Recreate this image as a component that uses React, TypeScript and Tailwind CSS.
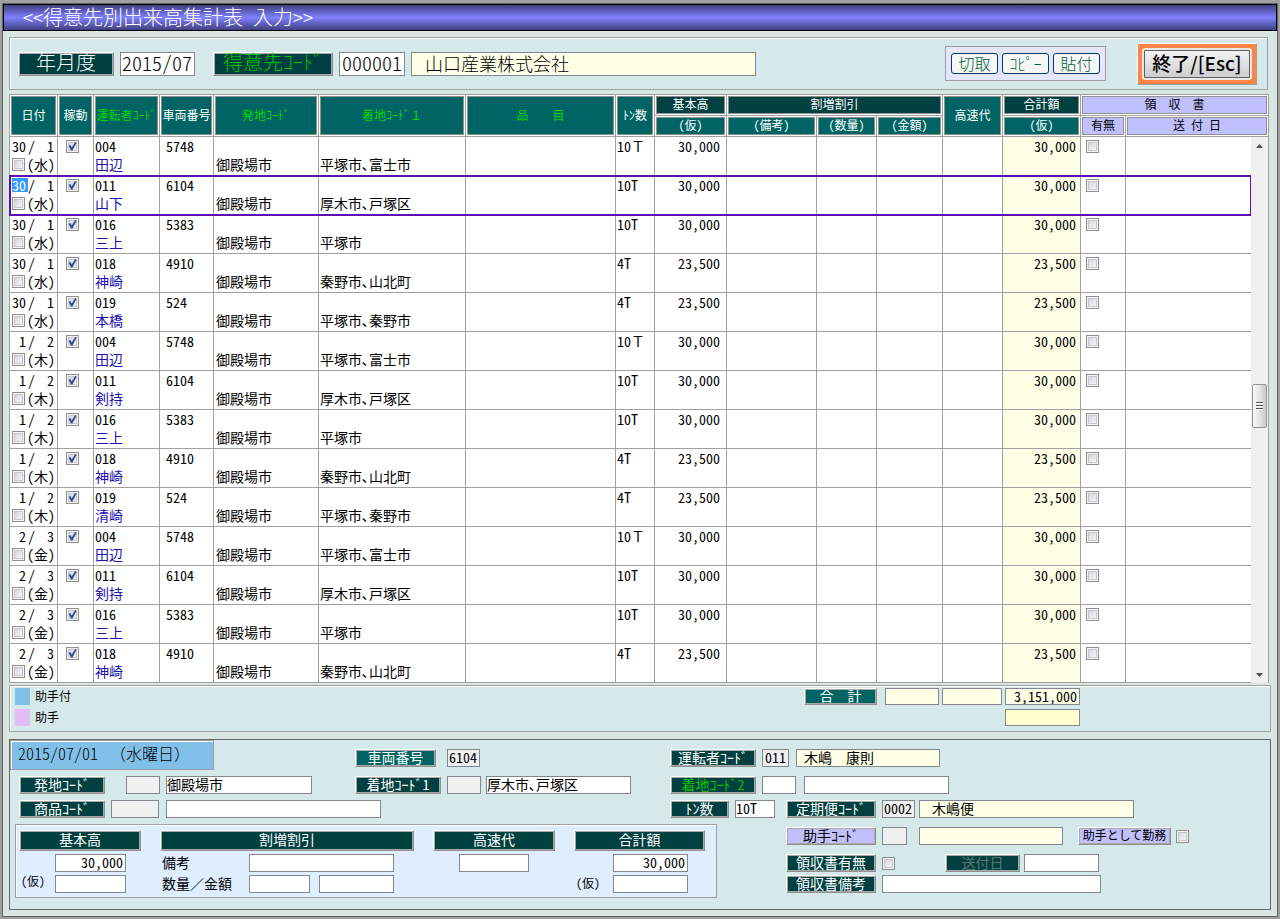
import type React from "react"

import { useState } from "react"
import { clsx } from "clsx"

type Trip = {
  day: string
  seq: string
  weekday: string
  driverCode: string
  driver: string
  vehicle: string
  origin: string
  destination: string
  tons: string
  amount: string
}

const routes = [
  { driverCode: "004", vehicle: "5748", destination: "平塚市､富士市", tons: "10Ｔ", amount: "30,000" },
  { driverCode: "011", vehicle: "6104", destination: "厚木市､戸塚区", tons: "10T", amount: "30,000" },
  { driverCode: "016", vehicle: "5383", destination: "平塚市", tons: "10T", amount: "30,000" },
  { driverCode: "018", vehicle: "4910", destination: "秦野市､山北町", tons: "4T", amount: "23,500" },
  { driverCode: "019", vehicle: "524", destination: "平塚市､秦野市", tons: "4T", amount: "23,500" },
]

const days = [
  { day: "30", seq: "1", weekday: "水", drivers: ["田辺", "山下", "三上", "神崎", "本橋"] },
  { day: "1", seq: "2", weekday: "木", drivers: ["田辺", "剣持", "三上", "神崎", "清崎"] },
  { day: "2", seq: "3", weekday: "金", drivers: ["田辺", "剣持", "三上", "神崎"] },
]

const trips: Trip[] = days.flatMap(({ drivers, ...date }) =>
  drivers.map((driver, i) => ({ ...date, ...routes[i], driver, origin: "御殿場市" })),
)

// full-width spaces and signs keep their full cell
const wide = "[font-feature-settings:normal]"

const columnWidths = [
  "w-[48px]",
  "w-[36px]",
  "w-[66px]",
  "w-[54px]",
  "w-[105px]",
  "w-[147px]",
  "w-[150px]",
  "w-[39px]",
  "w-[72px]",
  "w-[90px]",
  "w-[60px]",
  "w-[66px]",
  "w-[60px]",
  "w-[78px]",
  "w-[45px]",
  "",
]

function Columns() {
  return (
    <colgroup>
      {columnWidths.map((width, i) => (
        <col key={i} className={width} />
      ))}
    </colgroup>
  )
}

const tones = {
  dark: "bg-[#004040] text-white",
  teal: "bg-[#006464] text-white",
  green: "bg-[#004040] text-[#00c800]",
  tealGreen: "bg-[#006464] text-[#00d800]",
  muted: "bg-[#004040] text-[#5c7474]",
  lavender: "bg-[#c0c0ff] text-black",
}

type Tone = keyof typeof tones

type TagProps = {
  children: React.ReactNode
  htmlFor?: string
  tone?: Tone
  className?: string
}

function Tag({ children, htmlFor, tone = "dark", className }: TagProps) {
  const style = clsx(
    "flex shrink-0 items-center justify-center whitespace-pre border border-t-white border-l-white border-r-[#909090] border-b-[#909090] pb-[3px] shadow-[inset_0_0_0_1px_#a8a8a8]",
    tones[tone],
    className,
  )
  return htmlFor ? (
    <label htmlFor={htmlFor} className={style}>
      {children}
    </label>
  ) : (
    <span className={style}>{children}</span>
  )
}

type FieldProps = {
  id?: string
  label?: string
  value?: string
  fill?: string
  className?: string
}

function Field({ id, label, value = "", fill = "bg-white", className }: FieldProps) {
  const [text, setText] = useState(value)
  return (
    <input
      id={id}
      aria-label={label}
      type="text"
      value={text}
      onChange={(e) => setText(e.target.value)}
      className={clsx("block shrink-0 border border-[#828790] pb-0.5 outline-none", fill, className)}
    />
  )
}

type CheckProps = {
  id?: string
  label?: string
  checked?: boolean
}

function Check({ id, label, checked = false }: CheckProps) {
  const [on, setOn] = useState(checked)
  return (
    <span className="relative block size-[13px] shrink-0">
      <input
        id={id}
        aria-label={label}
        type="checkbox"
        checked={on}
        onChange={(e) => setOn(e.target.checked)}
        className="block size-[13px] appearance-none border border-[#8e8f8f] bg-linear-to-br from-[#ccd0d8] to-[#fcfcfc] shadow-[inset_0_0_0_1px_#f4f4f4,inset_0_0_0_2px_#c8c8cc]"
      />
      {on && (
        <svg viewBox="0 0 13 13" className="pointer-events-none absolute inset-0 size-[13px]" aria-hidden="true">
          <path d="M2.6 5.8 L4.4 5 L5.7 7.4 L9.2 2 L10.6 2.8 L6.4 10.4 L5 10.4 Z" fill="#33498f" />
        </svg>
      )}
    </span>
  )
}

type HeadProps = {
  children: React.ReactNode
  tone?: Tone
  colSpan?: number
  rowSpan?: number
  className?: string
}

function Head({ children, tone = "teal", colSpan, rowSpan, className }: HeadProps) {
  return (
    <th
      colSpan={colSpan}
      rowSpan={rowSpan}
      className={clsx(
        "overflow-hidden whitespace-pre border-r border-b border-[#a0a0a0] px-0 pt-0 pb-0.5 text-center align-middle text-xs leading-4 font-normal shadow-[inset_0_0_0_1px_#fff,inset_0_0_0_2px_#909090]",
        tones[tone],
        className,
      )}
    >
      {children}
    </th>
  )
}

function GridHeader() {
  return (
    <table className="w-full table-fixed border-separate border-spacing-0">
      <Columns />
      <thead>
        <tr className="h-[21px]">
          <Head rowSpan={2}>日付</Head>
          <Head rowSpan={2}>稼動</Head>
          <Head rowSpan={2} tone="tealGreen">運転者ｺｰﾄﾞ</Head>
          <Head rowSpan={2}>車両番号</Head>
          <Head rowSpan={2} tone="tealGreen">発地ｺｰﾄﾞ</Head>
          <Head rowSpan={2} tone="tealGreen" className={wide}>着地ｺｰﾄﾞ１</Head>
          <Head rowSpan={2} tone="tealGreen" className={wide}>品　　目</Head>
          <Head rowSpan={2}>ﾄﾝ数</Head>
          <Head tone="dark">基本高</Head>
          <Head tone="dark" colSpan={3}>割増割引</Head>
          <Head rowSpan={2}>高速代</Head>
          <Head tone="dark">合計額</Head>
          <Head tone="lavender" colSpan={2} className={wide}>領　収　書</Head>
        </tr>
        <tr className="h-[21px]">
          <Head>(仮)</Head>
          <Head>(備考)</Head>
          <Head>(数量)</Head>
          <Head>(金額)</Head>
          <Head>(仮)</Head>
          <Head tone="lavender">有無</Head>
          <Head tone="lavender">送 付 日</Head>
        </tr>
      </thead>
    </table>
  )
}

const cell = "border-r border-b border-[#a0a0a0] p-0 align-top"

function TripRow({ trip, selected }: { trip: Trip; selected: boolean }) {
  const name = `${trip.day}日 ${trip.driver}`
  return (
    <tr className={clsx("h-[39px]", selected && "outline-2 -outline-offset-1 outline-[#5c0fb4]")}>
      <td className={cell}>
        <div className="flex h-[18px] items-center pr-[3px] pl-0.5">
          {selected ? (
            <input
              aria-label="日"
              defaultValue={trip.day}
              className="h-3.5 w-4 bg-[#3399ff] leading-[14px] text-white outline-none"
            />
          ) : (
            <span className="w-4 whitespace-pre">{trip.day.padStart(2)}</span>
          )}
          <span>/</span>
          <span className="ml-auto">{trip.seq}</span>
        </div>
        <div className="flex h-[18px] items-center gap-0.5 pl-0.5">
          <Check label={`${name} 助手付`} />
          <span>({trip.weekday})</span>
        </div>
      </td>
      <td className={cell}>
        <div className="flex justify-center pt-[3px] pr-1.5">
          <Check label={`${name} 稼動`} checked />
        </div>
      </td>
      <td className={cell}>
        <div className="px-px">{trip.driverCode}</div>
        <div className="px-px text-[#2010b0]">{trip.driver}</div>
      </td>
      <td className={cell}>
        <div className="pl-1.5">{trip.vehicle}</div>
      </td>
      <td className={cell}>
        <div className="pt-[18px] pl-0.5">{trip.origin}</div>
      </td>
      <td className={cell}>
        <div className="pt-[18px] pl-px">{trip.destination}</div>
      </td>
      <td className={cell} />
      <td className={cell}>
        <div className="pl-px">
          {trip.tons.endsWith("Ｔ") ? (
            <>
              {trip.tons.slice(0, -1)}
              <span className={wide}>Ｔ</span>
            </>
          ) : (
            trip.tons
          )}
        </div>
      </td>
      <td className={cell}>
        <div className="pr-1.5 text-right">{trip.amount}</div>
      </td>
      <td className={cell} />
      <td className={cell} />
      <td className={cell} />
      <td className={cell} />
      <td className={clsx(cell, "bg-[#ffffe8]")}>
        <div className="pr-1 text-right">{trip.amount}</div>
      </td>
      <td className={cell}>
        <div className="pt-[3px] pl-[5px]">
          <Check label={`${name} 領収書有無`} />
        </div>
      </td>
      <td className="border-b border-[#a0a0a0] p-0" />
    </tr>
  )
}

function ScrollTrack() {
  return (
    <div className="flex w-[17px] shrink-0 flex-col items-center bg-[#f0f0f0]">
      <button type="button" aria-label="上へ" className="flex h-[17px] w-full items-center justify-center">
        <svg viewBox="0 0 7 4" className="h-1 w-[7px]" aria-hidden="true">
          <path d="M0 4 L3.5 0 L7 4 Z" fill="#505050" />
        </svg>
      </button>
      <div className="flex w-full grow flex-col items-center">
        <div className="grow-230" />
        <div className="flex h-11 w-[15px] shrink-0 flex-col items-center justify-center gap-px rounded-xs border border-[#959595] bg-linear-to-r from-[#f8f8f8] via-[#e4e4e6] to-[#c8c8cc]">
          <div className="h-0.5 w-[7px] border-b border-white bg-[#505050]" />
          <div className="h-0.5 w-[7px] border-b border-white bg-[#505050]" />
          <div className="h-0.5 w-[7px] border-b border-white bg-[#505050]" />
        </div>
        <div className="grow-238" />
      </div>
      <button type="button" aria-label="下へ" className="flex h-[17px] w-full items-center justify-center">
        <svg viewBox="0 0 7 4" className="h-1 w-[7px]" aria-hidden="true">
          <path d="M0 0 L3.5 4 L7 0 Z" fill="#505050" />
        </svg>
      </button>
    </div>
  )
}

function Toolbar() {
  const clip =
    "flex h-[21px] w-[47px] items-center justify-center rounded-[3px] border border-[#003c74] bg-[#f6f6f2] pb-0.5 text-base leading-4 text-[#006040]"
  return (
    <header className="mr-[3px] flex h-[53px] items-center border border-[#a0a0a0] bg-[#d6e9ea] pr-[10px] pl-2 text-xl leading-5 font-light shadow-[inset_1px_1px_0_#fff]">
      <Tag htmlFor="month" className="h-6 w-[96px]">年月度</Tag>
      <Field id="month" value="2015/07" className="ml-1.5 h-6 w-[75px] pl-px" />
      <Tag htmlFor="customer" tone="green" className="ml-[18px] h-6 w-[120px]">得意先ｺｰﾄﾞ</Tag>
      <Field id="customer" value="000001" className="ml-1.5 h-6 w-[66px] px-0.5" />
      <Field label="得意先名" value="山口産業株式会社" fill="bg-[#ffffe8]" className="ml-1.5 h-6 w-[345px] pl-[13px] text-lg leading-5" />
      <div className="ml-auto flex h-[35px] items-center gap-1 border border-[#a0a0a0] bg-[#e6e6fa] px-[5px]">
        <button type="button" className={clip}>切取</button>
        <button type="button" className={clip}>ｺﾋﾟｰ</button>
        <button type="button" className={clip}>貼付</button>
      </div>
      <div className="ml-[31px] border border-t-white border-l-white border-r-[#a0a0a0] border-b-[#a0a0a0] bg-[#ff8448] p-1">
        <button
          type="button"
          className={clsx(
            "flex h-8 w-[110px] items-center justify-center rounded-[3px] border-2 border-[#e8e8e8] bg-linear-to-b from-[#f4f4f4] to-[#cccccc] pb-0.5 text-[19px] leading-5 font-medium shadow-[inset_0_0_0_1px_#606060]",
            wide,
          )}
        >
          終了/[Esc]
        </button>
      </div>
    </header>
  )
}

function Totals() {
  return (
    <section className="mt-0.5 flex h-[47px] justify-between border border-[#a0a0a0] bg-[#d6e9ea] pt-0.5 pr-[190px] pl-[5px] shadow-[inset_1px_1px_0_#fff]">
      <ul className="flex flex-col gap-1 text-xs">
        <li className="flex h-[17px] items-center gap-[5px]">
          <span className="h-[17px] w-[15px] bg-[#80c0e8]" />
          <span className="pb-0.5">助手付</span>
        </li>
        <li className="flex h-[17px] items-center gap-[5px]">
          <span className="h-[17px] w-[15px] bg-[#e4bcf4]" />
          <span className="pb-0.5">助手</span>
        </li>
      </ul>
      <div className="flex items-start">
        <Tag tone="teal" className={clsx("mr-2 h-[17px] w-[73px] leading-4", wide)}>合　計</Tag>
        <Field label="割増割引合計" fill="bg-[#ffffe8]" className="h-[17px] w-[54px]" />
        <Field label="高速代合計" fill="bg-[#ffffe8]" className="ml-[3px] h-[17px] w-[60px]" />
        <div className="ml-[3px] flex flex-col gap-1">
          <Field label="合計額合計" value="3,151,000" fill="bg-[#ffffe8]" className="h-[17px] w-[75px] pr-0.5 text-right leading-4" />
          <Field label="合計額(仮)合計" fill="bg-[#ffffd0]" className="h-[17px] w-[75px]" />
        </div>
      </div>
    </section>
  )
}

function Charges() {
  return (
    <div className="flex h-[74px] w-[702px] shrink-0 items-start border border-[#a0a0a0] bg-[#deeeff] pt-[5px] pl-[3px] shadow-[inset_1px_1px_0_#fff]">
      <div className="w-[122px]">
        <Tag className="h-[21px]">基本高</Tag>
        <div className="mt-[3px] flex items-end">
          <span className="w-[36px] pb-1 pl-0.5 text-xs">(仮)</span>
          <div className="flex flex-col gap-[3px]">
            <Field label="基本高" value="30,000" className="h-[18px] w-[71px] pr-0.5 text-right" />
            <Field label="基本高(仮)" className="h-[18px] w-[71px]" />
          </div>
        </div>
      </div>
      <div className="ml-[19px] w-[254px]">
        <Tag className="h-[21px]">割増割引</Tag>
        <div className="mt-[3px] flex h-[18px] items-center pl-0.5">
          <label htmlFor="remark" className="w-[87px] pb-0.5">備考</label>
          <Field id="remark" className="h-[18px] w-[145px]" />
        </div>
        <div className="mt-[3px] flex h-[18px] items-center pl-0.5">
          <label htmlFor="quantity" className={clsx("w-[87px] pb-0.5", wide)}>数量／金額</label>
          <Field id="quantity" className="h-[18px] w-[61px]" />
          <Field label="金額" className="ml-[9px] h-[18px] w-[75px]" />
        </div>
      </div>
      <div className="ml-[19px] w-[122px]">
        <Tag htmlFor="toll" className="h-[21px]">高速代</Tag>
        <Field id="toll" className="mt-[3px] ml-[26px] h-[18px] w-[70px]" />
      </div>
      <div className="ml-[19px] w-[131px]">
        <Tag className="h-[21px]">合計額</Tag>
        <div className="mt-[3px] flex items-end">
          <span className="w-[39px] pb-0.5 pl-0.5 text-xs">(仮)</span>
          <div className="flex flex-col gap-[3px]">
            <Field label="合計額" value="30,000" className="h-[18px] w-[75px] pr-0.5 text-right" />
            <Field label="合計額(仮)" className="h-[18px] w-[75px]" />
          </div>
        </div>
      </div>
    </div>
  )
}

function Detail() {
  const grey = "bg-[#f0f0f0]"
  const cream = "bg-[#ffffe8]"
  return (
    <section className="mt-[7px] border border-[#606868] bg-[#d6e9ea] pb-[11px]">
      <div className="grid grid-cols-[345px_315px_1fr] gap-y-1.5">
        <div>
          <h2 className="flex h-[30px] w-[204px] items-center gap-3 border border-[#a0a0a0] bg-[#80c0e8] pb-1 pl-[7px] text-base leading-4 font-light shadow-[inset_1px_1px_0_#fff]">
            2015/07/01 <span className={wide}>（水曜日）</span>
          </h2>
        </div>
        <div className="flex items-end pb-[3px]">
          <Tag htmlFor="vehicle" tone="teal" className="h-[18px] w-[81px]">車両番号</Tag>
          <Field id="vehicle" value="6104" fill={grey} className="ml-[11px] h-[18px] w-[33px] pl-px" />
        </div>
        <div className="flex items-end pb-[3px]">
          <Tag htmlFor="driver" className="h-[18px] w-[86px]">運転者ｺｰﾄﾞ</Tag>
          <Field id="driver" value="011" fill={grey} className="ml-1.5 h-[18px] w-[27px] pl-0.5" />
          <Field label="運転者名" value="木嶋　康則" fill={cream} className={clsx("ml-[7px] h-[18px] w-[144px] pl-[7px]", wide)} />
        </div>

        <div className="flex pl-[9px]">
          <Tag htmlFor="origin" className="h-[18px] w-[86px]">発地ｺｰﾄﾞ</Tag>
          <Field id="origin" fill={grey} className="ml-[21px] h-[18px] w-[34px]" />
          <Field label="発地名" value="御殿場市" className="ml-1.5 h-[18px] w-[146px]" />
        </div>
        <div className="flex">
          <Tag htmlFor="destination" className="h-[18px] w-[86px]">着地ｺｰﾄﾞ1</Tag>
          <Field id="destination" fill={grey} className="ml-1.5 h-[18px] w-[34px]" />
          <Field label="着地名1" value="厚木市､戸塚区" className="ml-[5px] h-[18px] w-[145px]" />
        </div>
        <div className="flex">
          <Tag htmlFor="destination2" tone="green" className="h-[18px] w-[86px]">着地ｺｰﾄﾞ2</Tag>
          <Field id="destination2" className="ml-1.5 h-[18px] w-[34px]" />
          <Field label="着地名2" className="ml-2 h-[18px] w-[145px]" />
        </div>

        <div className="col-span-2 flex pl-[9px]">
          <Tag htmlFor="goods" className="h-[18px] w-[86px]">商品ｺｰﾄﾞ</Tag>
          <Field id="goods" fill={grey} className="ml-1.5 h-[18px] w-[48px]" />
          <Field label="商品名" className="ml-[7px] h-[18px] w-[215px]" />
        </div>
        <div className="flex">
          <Tag htmlFor="tons" className="h-[18px] w-[59px]">ﾄﾝ数</Tag>
          <Field id="tons" value="10T" className="ml-1.5 h-[18px] w-[40px]" />
          <Tag htmlFor="service" className="ml-[11px] h-[18px] w-[90px]">定期便ｺｰﾄﾞ</Tag>
          <Field id="service" value="0002" fill={grey} className="ml-1.5 h-[18px] w-[33px] pl-px" />
          <Field label="定期便名" value="木嶋便" fill={cream} className="ml-1 h-[18px] w-[215px] pl-3" />
        </div>
      </div>

      <div className="mt-1.5 flex items-start pl-[5px]">
        <Charges />
        <div className="ml-[69px] flex flex-col pt-[3px]">
          <div className="flex items-center">
            <Tag htmlFor="assistant" tone="lavender" className="h-[18px] w-[90px]">助手ｺｰﾄﾞ</Tag>
            <Field id="assistant" fill={grey} className="ml-1.5 h-[18px] w-[25px]" />
            <Field label="助手名" fill={cream} className="ml-3 h-[18px] w-[144px]" />
            <Tag htmlFor="as-assistant" tone="lavender" className="mr-[5px] ml-[15px] h-[18px] w-[93px] text-xs">助手として勤務</Tag>
            <Check id="as-assistant" />
          </div>
          <div className="mt-[9px] flex items-center">
            <Tag htmlFor="receipt" className="mr-1.5 h-[18px] w-[90px]">領収書有無</Tag>
            <Check id="receipt" />
            <Tag htmlFor="sent" tone="muted" className="ml-[50px] h-[18px] w-[75px]">送付日</Tag>
            <Field id="sent" className="ml-1 h-[18px] w-[75px]" />
          </div>
          <div className="mt-[3px] flex items-center">
            <Tag htmlFor="receipt-note" className="h-[18px] w-[90px]">領収書備考</Tag>
            <Field id="receipt-note" className="ml-1.5 h-[18px] w-[219px]" />
          </div>
        </div>
      </div>
    </section>
  )
}

export default function App() {
  return (
    <div className="flex min-h-screen flex-col bg-[#a0a0a0] px-0.5 pt-[3px] pb-0.5 font-['Noto_Sans_CJK_JP','Liberation_Sans',sans-serif] text-sm leading-[18px] text-black [font-feature-settings:'hwid']">
      <div className="grow border border-[#606060] bg-[#dae6e2] pb-1.5">
        <h1 className="flex h-[27px] items-center border border-black bg-linear-to-b from-[#404080] via-[#8080ff] to-[#404080] pb-0.5 pl-[19px] text-xl leading-5 font-light text-white">
          &lt;&lt;得意先別出来高集計表 入力&gt;&gt;
        </h1>
        <main className="px-1.5 pt-1.5">
          <Toolbar />
          <div className="mt-1 mr-0.5 border-t border-l border-[#a0a0a0]">
            <GridHeader />
            <div className="flex border-r border-[#a0a0a0] bg-white">
              <table className="w-full table-fixed border-separate border-spacing-0">
                <Columns />
                <tbody>
                  {trips.map((trip, i) => (
                    <TripRow key={i} trip={trip} selected={i === 1} />
                  ))}
                </tbody>
              </table>
              <ScrollTrack />
            </div>
          </div>
          <Totals />
          <Detail />
        </main>
      </div>
    </div>
  )
}
